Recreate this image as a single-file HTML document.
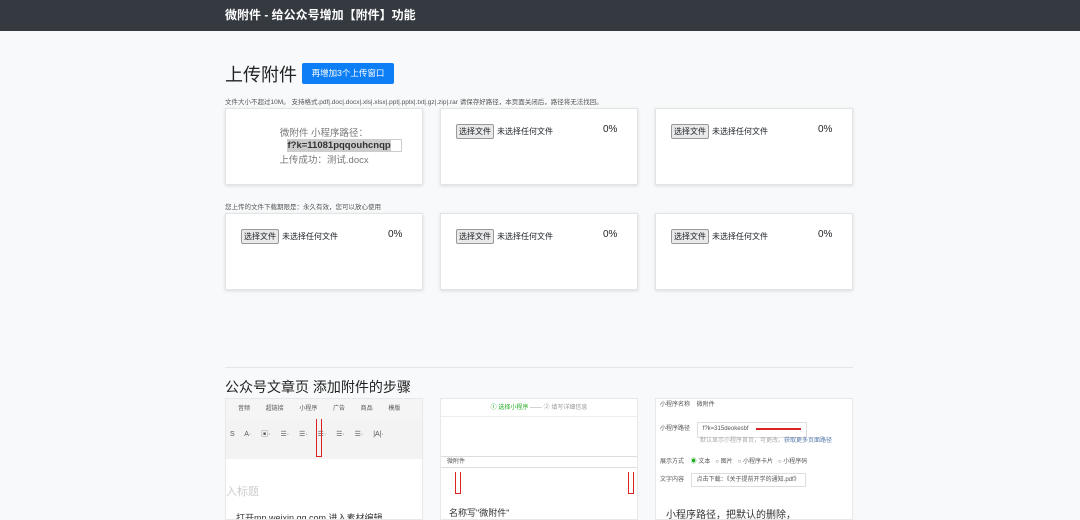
<!DOCTYPE html>
<html><head><meta charset="utf-8"><style>
*{box-sizing:border-box;margin:0;padding:0}
body{width:1080px;height:520px;overflow:hidden;background:#f8f9fa;font-family:"Liberation Sans","Noto Sans CJK SC",sans-serif;position:relative;color:#212529}
.nav{position:absolute;left:0;top:0;width:1080px;height:31px;background:#343a40;color:#fff;font-weight:bold;font-size:12px;line-height:31px;padding-left:225px}
.a{position:absolute}
.card{position:absolute;width:198px;height:77px;background:#fff;border:1px solid #e2e4e6;box-shadow:0 1px 3px rgba(0,0,0,.12)}
.fi{position:absolute;top:15px;left:15px;font-size:8px;white-space:nowrap;display:flex;align-items:center}
.fi b{font-weight:normal;border:1px solid #999;background:#e9e9e9;padding:1px 2px;margin-right:3px;border-radius:2px}
.pct{position:absolute;top:15px;left:162px;font-size:10px}
.sm{font-size:6.5px;color:#555;white-space:nowrap}
.shot{position:absolute;top:398px;width:198px;height:122px;background:#fff;border:1px solid #e8e8e8;font-size:6px;color:#555;overflow:hidden;white-space:nowrap}
.arrow{position:absolute;width:6px;border:1.5px solid #d22;border-top:none}
</style></head><body>
<div class="nav">微附件 - 给公众号增加【附件】功能</div>
<div class="a" style="left:225px;top:61px;font-size:18px;color:#222">上传附件</div>
<div class="a" style="left:302px;top:63px;width:92px;height:21px;background:#0d7ef5;color:#fff;font-size:8.5px;line-height:21px;text-align:center;border-radius:2px">再增加3个上传窗口</div>
<div class="a sm" style="left:225px;top:96px">文件大小不超过10M。 支持格式.pdf|.doc|.docx|.xls|.xlsx|.ppt|.pptx|.txt|.gz|.zip|.rar 请保存好路径，本页面关闭后，路径将无法找回。</div>
<div class="card" style="left:225px;top:108px;text-align:center;font-size:9.5px;color:#777">
<div style="margin-top:16px">微附件 小程序路径：</div>
<div style="display:inline-block;border:1px solid #ccc;width:115px;margin-left:40px;text-align:left;font-weight:bold;color:#333;font-size:9.5px"><span style="background:#ccc">f?k=11081pqqouhcnqp</span></div>
<div>上传成功：测试.docx</div></div>
<div class="card" style="left:440px;top:108px"><div class="fi"><b>选择文件</b>未选择任何文件</div><div class="pct">0%</div></div>
<div class="card" style="left:655px;top:108px"><div class="fi"><b>选择文件</b>未选择任何文件</div><div class="pct">0%</div></div>
<div class="a sm" style="left:225px;top:201px">您上传的文件下载期限是：永久有效，您可以放心使用</div>
<div class="card" style="left:225px;top:213px"><div class="fi"><b>选择文件</b>未选择任何文件</div><div class="pct">0%</div></div>
<div class="card" style="left:440px;top:213px"><div class="fi"><b>选择文件</b>未选择任何文件</div><div class="pct">0%</div></div>
<div class="card" style="left:655px;top:213px"><div class="fi"><b>选择文件</b>未选择任何文件</div><div class="pct">0%</div></div>
<div class="a" style="left:225px;top:367px;width:628px;height:1px;background:#e5e5e5"></div>
<div class="a" style="left:225px;top:377px;font-size:14px;color:#222">公众号文章页 添加附件的步骤</div>
<div class="shot" style="left:225px">
<div style="background:#f5f5f5;height:20px;line-height:20px;padding-left:12px;word-spacing:14px">音频 超链接 小程序 广告 商品 模版</div>
<div style="height:40px;background:#f3f3f3;padding:10px 4px;font-size:7px;word-spacing:8px">S A· ▣· ☰· ☰· ☰· ☰· ☰· |A|·</div>
<div style="margin-top:24px;font-size:11px;color:#ccc">入标题</div>
<div style="margin-top:12px;margin-left:10px;font-size:9px;color:#333">打开mp.weixin.qq.com 进入素材编辑</div>
<div class="arrow" style="left:90px;top:20px;height:38px"></div>
</div>
<div class="shot" style="left:440px">
<div style="text-align:center;padding-top:3px;color:#2a2">① 选择小程序 <span style="color:#999">—— ② 填写详细信息</span></div>
<div style="border-top:1px solid #eee;margin-top:5px"></div>
<div style="margin-top:39px;border-top:1px solid #ddd;border-bottom:1px solid #ddd;height:12px;padding-left:6px;line-height:11px">微附件</div>
<div style="margin-top:38px;margin-left:8px;font-size:9px;color:#333">名称写"微附件"</div>
<div class="arrow" style="left:14px;top:73px;height:22px"></div>
<div class="arrow" style="left:187px;top:73px;height:22px"></div>
</div>
<div class="shot" style="left:655px;padding:3px 4px;line-height:1.3">
<div>小程序名称 &nbsp;&nbsp; 微附件</div>
<div style="margin-top:12px">小程序路径 &nbsp;&nbsp; <span style="border:1px solid #ddd;padding:3px 5px;display:inline-block;width:110px">f?k=315deokesbf</span></div>
<div style="margin-left:40px;color:#aaa">默认显示小程序首页，可更改。<span style="color:#57a">获取更多页面路径</span></div>
<div style="margin-top:14px">展示方式 &nbsp;&nbsp; <span style="color:#2a2">◉</span> 文本 &nbsp; ○ 图片 &nbsp; ○ 小程序卡片 &nbsp; ○ 小程序码</div>
<div style="margin-top:10px">文字内容 &nbsp;&nbsp; <span style="border:1px solid #ddd;padding:3px 5px">点击下载：《关于提前开学的通知.pdf》</span></div>
<div style="margin-top:24px;margin-left:6px;font-size:10px;color:#333">小程序路径，把默认的删除，</div>
<div class="a" style="left:100px;top:29px;width:45px;height:2px;background:#d22"></div>
</div>
</body></html>
